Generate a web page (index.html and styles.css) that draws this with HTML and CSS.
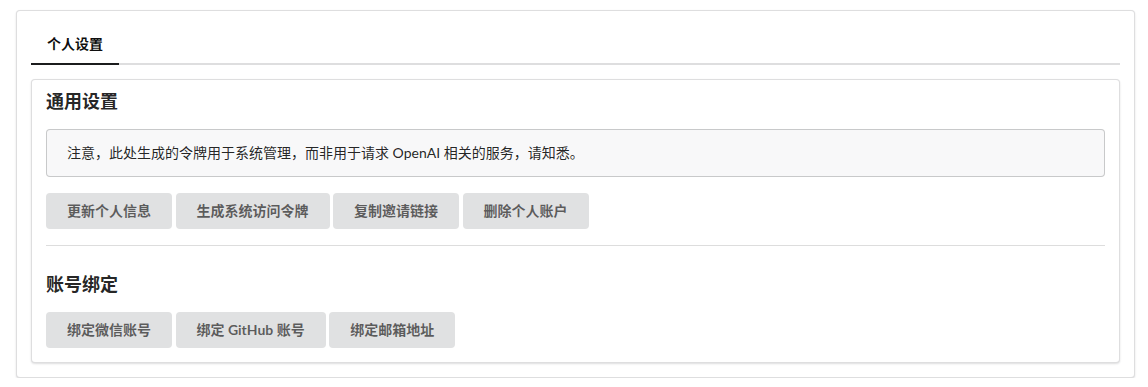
FILE: index.html
```html
<!DOCTYPE html>
<html lang="zh-CN">
<head>
    <meta charset="UTF-8">
    <title>个人设置</title>
    <link rel="stylesheet" href="styles.css">
</head>
<body>
    <div class="segment outer">
        <div class="tab-menu">
            <a class="tab-item active">个人设置</a>
        </div>

        <div class="segment inner">
            <h3 class="header first">通用设置</h3>
            <div class="message">
                注意，此处生成的令牌用于系统管理，而非用于请求 OpenAI 相关的服务，请知悉。
            </div>
            <div class="buttons">
                <button class="btn">更新个人信息</button>
                <button class="btn">生成系统访问令牌</button>
                <button class="btn">复制邀请链接</button>
                <button class="btn">删除个人账户</button>
            </div>

            <div class="divider"></div>

            <h3 class="header">账号绑定</h3>
            <div class="buttons">
                <button class="btn">绑定微信账号</button>
                <button class="btn">绑定 GitHub 账号</button>
                <button class="btn">绑定邮箱地址</button>
            </div>
        </div>
    </div>
</body>
</html>
```

FILE: styles.css
```css
body {
    margin: 0;
    padding: 10px 13px 0 16px;
    background-color: #ffffff;
    font-family: Lato, "Noto Sans CJK SC", "Helvetica Neue", Arial, sans-serif;
    font-size: 14px;
    line-height: 1.4285em;
    color: rgba(0, 0, 0, 0.87);
}
.segment {
    background-color: #ffffff;
    border: 1px solid rgba(34, 36, 38, 0.15);
    border-radius: 4px;
    box-shadow: 0 1px 2px 0 rgba(34, 36, 38, 0.15);
    padding: 14px;
}
.tab-menu {
    display: flex;
    border-bottom: 2px solid rgba(34, 36, 38, 0.15);
}
.tab-item {
    padding: 12px 16px 12px;
    margin-bottom: -2px;
    line-height: 1;
    border-bottom: 2px solid transparent;
    color: rgba(0, 0, 0, 0.87);
    cursor: pointer;
}
.tab-item.active {
    border-bottom-color: #1b1c1d;
    font-weight: 700;
    color: rgba(0, 0, 0, 0.95);
}
.inner {
    margin-top: 14px;
}
.header {
    font-size: 18px;
    font-weight: 700;
    line-height: 1.2857em;
    margin: 26px 0 16px;
}
.header.first {
    margin-top: -4px;
}
.message {
    background-color: #f8f8f9;
    box-shadow: 0 0 0 1px rgba(34, 36, 38, 0.22) inset;
    border-radius: 4px;
    padding: 14px 21px;
    font-size: 14px;
    line-height: 20px;
    margin-bottom: 16px;
}
.buttons {
    display: flex;
    gap: 3.5px;
}
.btn {
    font-family: inherit;
    font-size: 14px;
    font-weight: 700;
    line-height: 1;
    padding: 11px 21px;
    border: none;
    border-radius: 4px;
    background-color: #e0e1e2;
    color: rgba(0, 0, 0, 0.6);
    cursor: pointer;
}
.btn:hover {
    background-color: #cacbcd;
}
.divider {
    margin: 16px 0 0;
    border-top: 1px solid rgba(34, 36, 38, 0.15);
    border-bottom: 1px solid rgba(255, 255, 255, 0.1);
}
```
